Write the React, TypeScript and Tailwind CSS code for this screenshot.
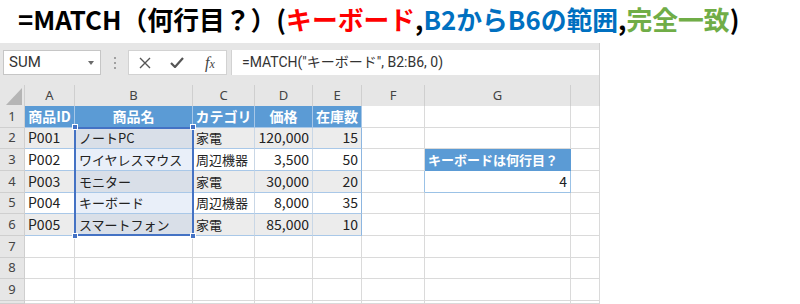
import React from "react";

const JP = { fontFamily: '"Noto Sans CJK JP", "Noto Sans", sans-serif' };

const colLetters = ["", "A", "B", "C", "D", "E", "F", "G", ""];

const tableData: string[][] = [
  ["商品ID", "商品名", "カテゴリ", "価格", "在庫数"],
  ["P001", "ノートPC", "家電", "120,000", "15"],
  ["P002", "ワイヤレスマウス", "周辺機器", "3,500", "50"],
  ["P003", "モニター", "家電", "30,000", "20"],
  ["P004", "キーボード", "周辺機器", "8,000", "35"],
  ["P005", "スマートフォン", "家電", "85,000", "10"],
];

function HeaderCell({ label }: { label: string }) {
  return (
    <div className="flex items-center justify-center border-r border-[#cfcfcf] bg-[#e6e6e6] text-[13px] text-[#444]" style={{ fontFamily: '"Noto Sans", sans-serif' }}>
      {label}
    </div>
  );
}

function Corner() {
  return (
    <div className="relative border-r border-[#cfcfcf] bg-[#e6e6e6]">
      <svg className="absolute right-[2px] bottom-[1px]" width="16" height="17" viewBox="0 0 16 17">
        <polygon points="16,0 16,17 0,17" fill="#b5b5b5" />
      </svg>
    </div>
  );
}

function RowNum({ n }: { n: string }) {
  return (
    <div className="flex items-center justify-center border-r border-b border-[#cfcfcf] bg-[#e6e6e6] text-[13px] text-[#444]" style={{ fontFamily: '"Noto Sans", sans-serif' }}>
      {n}
    </div>
  );
}

function TCell({ text, r, c }: { text: string; r: number; c: number }) {
  const numeric = c >= 3 && r > 0;
  if (r === 0) {
    return (
      <div className="flex items-center justify-center border-r border-b border-[#a7c7e7] bg-[#5b9bd5] text-[14px] font-bold text-white whitespace-nowrap overflow-hidden" style={JP}>
        {text}
      </div>
    );
  }
  const band = r % 2 === 1;
  const selected = c === 1;
  let bg = band ? "bg-[#ececec]" : "bg-white";
  if (selected) bg = band ? "bg-[#d9dfe8]" : "bg-[#e9eff9]";
  const rightEdge = c === 4;
  const size = c === 0 || numeric ? "text-[14px]" : "text-[13px]";
  return (
    <div
      className={
        "flex items-center border-b border-[#a9c8e8] text-[#222] whitespace-nowrap overflow-hidden " +
        size +
        " " +
        bg +
        " " +
        (rightEdge ? "border-r border-r-[#8db6e0]" : "border-r border-r-[#c9d7e6]") +
        " " +
        (numeric ? "justify-end pr-[3px]" : "justify-start pl-[3px]")
      }
      style={JP}
    >
      <span className={c === 1 ? "pl-[1px]" : ""}>{text}</span>
    </div>
  );
}

function Empty() {
  return <div className="border-r border-b border-[#dadada] bg-white" />;
}

export default function App() {
  const cells: React.ReactNode[] = [];
  colLetters.forEach((l, i) => {
    if (i === 0) cells.push(<Corner key="corner" />);
    else cells.push(<HeaderCell key={"h" + i} label={l} />);
  });
  for (let r = 1; r <= 10; r++) {
    cells.push(<RowNum key={"rn" + r} n={r <= 9 ? String(r) : ""} />);
    for (let c = 1; c <= 8; c++) {
      const key = r + "-" + c;
      if (r <= 6 && c <= 5) {
        cells.push(<TCell key={key} text={tableData[r - 1][c - 1]} r={r - 1} c={c - 1} />);
      } else if (r === 3 && c === 7) {
        cells.push(
          <div key={key} className="flex items-center pl-[3px] border-r border-b border-[#5b9bd5] bg-[#5b9bd5] text-[13px] font-bold text-white whitespace-nowrap overflow-hidden" style={JP}>
            キーボードは何行目？
          </div>
        );
      } else if (r === 4 && c === 7) {
        cells.push(
          <div key={key} className="flex items-center justify-end pr-[3px] border-r border-b border-[#9bc2e6] bg-white text-[14px] text-[#222]" style={JP}>
            4
          </div>
        );
      } else if (r === 4 && c === 6) {
        cells.push(<div key={key} className="border-r border-r-[#9bc2e6] border-b border-b-[#dadada] bg-white" />);
      } else {
        cells.push(<Empty key={key} />);
      }
    }
  }

  return (
    <div className="w-[800px] h-[304px] overflow-hidden bg-white">
      <div className="h-[43px] pl-[18px] pt-[1px] leading-[35px] text-[25.8px] font-bold text-black whitespace-nowrap" style={JP}>
        <span>=MATCH（何行目？）(</span>
        <span className="text-[#ff0000]">キーボード</span>
        <span>,</span>
        <span className="text-[#0070c0]">B2からB6の範囲</span>
        <span>,</span>
        <span className="text-[#70ad47]">完全一致</span>
        <span>)</span>
      </div>
      <div className="w-[600px] bg-[#e6e6e6] border-r border-[#d0d0d0]">
        <div className="h-[42px] flex items-start pt-[7px] pl-[3px]">
          <div className="w-[98px] h-[25px] bg-white border border-[#c6c6c6] flex items-center justify-between pl-[5px] pr-[6px]">
            <span className="text-[15px] text-[#333]" style={{ fontFamily: 'Roboto, "Noto Sans", sans-serif' }}>SUM</span>
            <svg width="6" height="4" viewBox="0 0 6 4"><polygon points="0,0 6,0 3,4" fill="#6b6b6b" /></svg>
          </div>
          <div className="w-[27px] h-[25px] flex flex-col items-center justify-center gap-[3px]">
            <div className="w-[2px] h-[2px] bg-[#a0a0a0]" />
            <div className="w-[2px] h-[2px] bg-[#a0a0a0]" />
            <div className="w-[2px] h-[2px] bg-[#a0a0a0]" />
          </div>
          <div className="w-[99px] h-[25px] bg-white border border-[#d2d2d2] flex items-center">
            <div className="w-[33px] flex justify-center">
              <svg width="12" height="12" viewBox="0 0 12 12"><path d="M1 1 L11 11 M11 1 L1 11" stroke="#555" strokeWidth="1.4" /></svg>
            </div>
            <div className="w-[33px] flex justify-center">
              <svg width="14" height="11" viewBox="0 0 14 11"><path d="M1 6 L5 10 L13 1" stroke="#555" strokeWidth="2.2" fill="none" /></svg>
            </div>
            <div className="w-[33px] flex justify-center">
              <span className="italic text-[16px] text-[#444]" style={{ fontFamily: '"Liberation Serif", serif' }}>f<span className="text-[12px]">x</span></span>
            </div>
          </div>
          <div className="ml-[4px] flex-1 h-[25px] bg-white border-l border-[#d2d2d2] flex items-center pl-[10px]">
            <span className="text-[14px] text-[#333] whitespace-nowrap" style={{ fontFamily: 'Roboto, "Noto Sans CJK JP", sans-serif' }}>
              =MATCH("キーボード", B2:B6, 0)
            </span>
          </div>
        </div>
        <div className="relative grid grid-cols-[25px_50px_118px_62px_58px_49px_63px_146px_29px] grid-rows-[21px_repeat(9,21.67px)_3px]">
          {cells}
          <div className="absolute left-[74px] top-[41.5px] w-[120px] h-[109.5px] border-2 border-[#4472c4] pointer-events-none" />
          <div className="absolute left-[72px] top-[39px] w-[6px] h-[6px] bg-[#4472c4] border border-white" />
          <div className="absolute left-[190px] top-[39px] w-[6px] h-[6px] bg-[#4472c4] border border-white" />
          <div className="absolute left-[72px] top-[148px] w-[6px] h-[6px] bg-[#4472c4] border border-white" />
          <div className="absolute left-[190px] top-[148px] w-[6px] h-[6px] bg-[#4472c4] border border-white" />
        </div>
      </div>
    </div>
  );
}
